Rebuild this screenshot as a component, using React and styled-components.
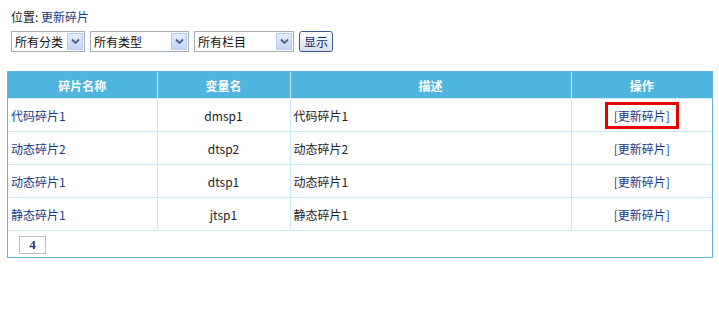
import React from "react";
import styled, { createGlobalStyle } from "styled-components";

const GlobalStyle = createGlobalStyle`
  body {
    margin: 0;
    background: #fff;
    font-family: "Noto Sans CJK SC", "Liberation Sans", sans-serif;
    font-size: 12px;
    color: #222;
  }
`;

const Page = styled.div`
  padding: 7px 7px;
`;

const Location = styled.div`
  padding: 1px 4px 0;
  height: 18px;
  line-height: 18px;
`;

const Link = styled.a`
  color: #173a86;
  text-decoration: none;
`;

const Filters = styled.div`
  display: flex;
  align-items: center;
  gap: 5px;
  padding: 5px 4px 0;
  height: 21px;
`;

const SelectBox = styled.div`
  display: flex;
  width: ${(p) => p.width}px;
  height: 21px;
  box-sizing: border-box;
  border: 1px solid #a5acb5;
  background: #fff;
`;

const SelectText = styled.div`
  flex: 1;
  padding-left: 3px;
  line-height: 19px;
  font-size: 12px;
  white-space: nowrap;
  overflow: hidden;
  color: #111;
`;

const Arrow = styled.div`
  width: 16px;
  margin: 1px;
  box-sizing: border-box;
  border: 1px solid #b8cdf0;
  background: linear-gradient(#e3ecfd, #c3d6f6);
  display: flex;
  align-items: center;
  justify-content: center;
`;

const ShowButton = styled.button`
  height: 21px;
  width: 34px;
  padding: 0;
  border: 1px solid #3c5a8c;
  border-radius: 3px;
  background: linear-gradient(#ffffff, #d6dfee);
  font-family: inherit;
  font-size: 12px;
  color: #0c2a6a;
`;

const Frame = styled.div`
  margin-top: 19px;
  width: 704px;
  border: 1px solid #5db7e0;
`;

const Table = styled.table`
  width: 100%;
  border-collapse: collapse;
  table-layout: fixed;
`;

const Th = styled.th`
  height: 26px;
  padding: 0;
  background: #4fb4de;
  color: #fff;
  font-weight: bold;
  font-size: 12px;
  border-left: 1px solid #c4e6f5;
  &:first-child {
    border-left: none;
  }
`;

const Td = styled.td`
  height: 32px;
  padding: 0 3px;
  border: 1px solid #cde9f5;
  text-align: ${(p) => p.align || "left"};
  font-size: 12px;
  color: #222;
  &:first-child {
    border-left: none;
  }
  &:last-child {
    border-right: none;
  }
`;

const Marked = styled.span`
  display: inline-block;
  padding: 3px 6px;
  border: 3px solid #e60000;
  line-height: 15px;
`;

const PagerCell = styled.td`
  height: 26px;
  padding: 0 11px;
  border-top: 1px solid #cde9f5;
`;

const PageNum = styled.span`
  display: inline-block;
  width: 27px;
  height: 18px;
  box-sizing: border-box;
  border: 1px solid #b8c0c8;
  text-align: center;
  line-height: 16px;
  font-family: "Liberation Serif", serif;
  font-weight: bold;
  font-size: 13px;
  color: #1a3480;
`;

const ChevronDown = () => (
  <svg width="9" height="7" viewBox="0 0 9 7">
    <path d="M1 1.5 L4.5 5 L8 1.5" fill="none" stroke="#4d6185" strokeWidth="1.8" />
  </svg>
);

const Select = ({ label, width }) => (
  <SelectBox width={width}>
    <SelectText>{label}</SelectText>
    <Arrow>
      <ChevronDown />
    </Arrow>
  </SelectBox>
);

const rows = [
  { name: "代码碎片1", code: "dmsp1", desc: "代码碎片1", marked: true },
  { name: "动态碎片2", code: "dtsp2", desc: "动态碎片2" },
  { name: "动态碎片1", code: "dtsp1", desc: "动态碎片1" },
  { name: "静态碎片1", code: "jtsp1", desc: "静态碎片1" },
];

export default function App() {
  return (
    <Page>
      <GlobalStyle />
      <Location>
        位置: <Link href="#">更新碎片</Link>
      </Location>
      <Filters>
        <Select label="所有分类" width={74} />
        <Select label="所有类型" width={99} />
        <Select label="所有栏目" width={100} />
        <ShowButton>显示</ShowButton>
      </Filters>
      <Frame>
        <Table>
          <colgroup>
            <col style={{ width: 149 }} />
            <col style={{ width: 133 }} />
            <col style={{ width: 281 }} />
            <col style={{ width: 141 }} />
          </colgroup>
          <thead>
            <tr>
              <Th>碎片名称</Th>
              <Th>变量名</Th>
              <Th>描述</Th>
              <Th>操作</Th>
            </tr>
          </thead>
          <tbody>
            {rows.map((r) => (
              <tr key={r.code}>
                <Td>
                  <Link href="#">{r.name}</Link>
                </Td>
                <Td align="center">{r.code}</Td>
                <Td>{r.desc}</Td>
                <Td align="center">
                  {r.marked ? (
                    <Marked>
                      <Link href="#">[更新碎片]</Link>
                    </Marked>
                  ) : (
                    <Link href="#">[更新碎片]</Link>
                  )}
                </Td>
              </tr>
            ))}
            <tr>
              <PagerCell colSpan={4}>
                <PageNum>4</PageNum>
              </PagerCell>
            </tr>
          </tbody>
        </Table>
      </Frame>
    </Page>
  );
}
